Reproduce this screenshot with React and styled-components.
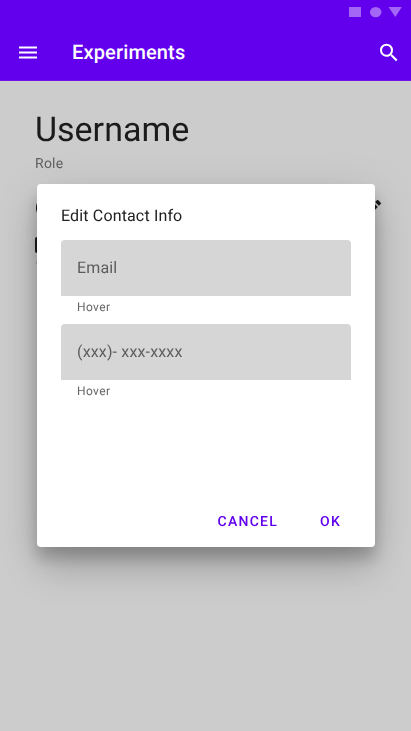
import React from "react";
import styled, { createGlobalStyle } from "styled-components";

const GlobalStyle = createGlobalStyle`
  * { box-sizing: border-box; }
  html, body { margin: 0; background: #cccccc; }
  body {
    font-family: Roboto, "Liberation Sans", sans-serif;
    text-rendering: geometricPrecision;
    overflow: hidden;
  }
  button { font-family: inherit; border: 0; background: none; padding: 0; cursor: pointer; text-rendering: inherit; }
`;

const Screen = styled.div`
  position: relative;
  display: flex;
  flex-direction: column;
  width: 411px;
  height: 731px;
  overflow: hidden;
  background: #cccccc;
`;

const Header = styled.header`
  height: 81px;
  flex: none;
  background: #6200ee;
  border-bottom: 1px solid #6c13ea;
`;

const StatusBar = styled.div`
  display: flex;
  justify-content: flex-end;
  height: 24px;

  svg { display: block; }
`;

const AppBar = styled.div`
  display: flex;
  align-items: center;
  height: 56px;
  padding: 0 10px 0 16px;
`;

const IconButton = styled.button`
  display: flex;
  width: 24px;
  height: 24px;
  color: #ffffff;
`;

const AppTitle = styled.h1`
  flex: 1;
  margin: 0 0 0 32px;
  color: #ffffff;
  font-size: 20px;
  font-weight: 500;
  line-height: 24px;
  letter-spacing: 0.15px;
`;

const Profile = styled.main`
  display: flex;
  flex-direction: column;
  padding: 28px 24px 0 35px;
  will-change: transform;
`;

const UserName = styled.h2`
  margin: 0;
  color: #1b1b1b;
  font-size: 34px;
  font-weight: 400;
  line-height: 42px;
  letter-spacing: 0;
`;

const Role = styled.p`
  margin: 3px 0 0;
  color: #616161;
  font-size: 14px;
  line-height: 20px;
  letter-spacing: 0.25px;
`;

const ContactHeading = styled.div`
  display: flex;
  align-items: flex-start;
  justify-content: space-between;
  height: 32px;
  margin-top: 22px;
  padding-right: 3px;
  color: #1b1b1b;
  font-size: 20px;
  font-weight: 500;
  line-height: 25px;
`;

const EditIcon = styled.svg`
  display: block;
  width: 24px;
  height: 24px;
  margin-top: 0.5px;
`;

const ContactIcon = styled.svg`
  display: block;
  width: 20px;
  height: 16px;
  margin-top: 9px;
`;

const ContactDetail = styled.div`
  margin-top: 0;
  padding-left: 1px;
  color: #616161;
  font-size: 14px;
  line-height: 18px;
`;

const Overlay = styled.div`
  position: absolute;
  inset: 0;
  display: flex;
  align-items: flex-start;
  padding: 184px 36px 0 37px;
`;

const Dialog = styled.section`
  display: flex;
  flex-direction: column;
  width: 338px;
  height: 363px;
  padding: 20px 24px 7px;
  border-radius: 4px;
  background: #ffffff;
  box-shadow: 0 11px 15px rgba(0, 0, 0, 0.2), 0 9px 46px rgba(0, 0, 0, 0.12),
    0 24px 38px rgba(0, 0, 0, 0.14);
`;

const DialogTitle = styled.h3`
  margin: 0 0 12px;
  color: #212121;
  font-size: 16px;
  font-weight: 400;
  line-height: 24px;
  letter-spacing: 0.15px;
`;

const Field = styled.label`
  display: block;
  height: 84px;
`;

const Input = styled.input`
  display: block;
  width: 100%;
  height: 56px;
  padding: 0 16px 2px;
  border: 0;
  border-radius: 4px 4px 0 0;
  outline: 0;
  background: #d6d6d6;
  font: 400 16px/24px Roboto, "Liberation Sans", sans-serif;
  letter-spacing: 0.15px;
  text-rendering: inherit;

  &::placeholder { color: #5c5c5c; opacity: 1; }
`;

const Helper = styled.span`
  display: block;
  padding: 3px 16px 0;
  color: #666666;
  font-size: 12px;
  line-height: 16px;
  letter-spacing: 0.4px;
`;

const Actions = styled.div`
  display: flex;
  justify-content: flex-end;
  gap: 42px;
  margin-top: auto;
  padding-right: 10px;
`;

const ActionButton = styled.button`
  height: 36px;
  color: #6200ee;
  font-size: 14px;
  font-weight: 500;
  letter-spacing: 1.25px;
`;

export default function App() {
  return (
    <>
      <GlobalStyle />
      <Screen>
        <Header>
          <StatusBar>
            <svg width="64" height="24" viewBox="347 0 64 24" fill="#a366f5" aria-hidden="true">
              <path d="M349 7h12v10h-12z" />
              <ellipse cx="375.7" cy="12.1" rx="5.8" ry="5.2" />
              <path d="M388.5 7h13.3l-6.5 10z" />
            </svg>
          </StatusBar>
          <AppBar>
            <IconButton aria-label="Menu">
              <svg width="24" height="24" viewBox="0 -0.5 24 24" fill="currentColor">
                <path d="M3 18h18v-2H3v2zm0-5h18v-2H3v2zm0-7v2h18V6H3z" />
              </svg>
            </IconButton>
            <AppTitle>Experiments</AppTitle>
            <IconButton aria-label="Search">
              <svg width="24" height="24" viewBox="0 -0.7 24 24" fill="currentColor">
                <path d="M15.5 14h-.79l-.28-.27A6.471 6.471 0 0 0 16 9.5 6.5 6.5 0 1 0 9.5 16c1.61 0 3.09-.59 4.23-1.57l.27.28v.79l5 4.99L20.49 19l-4.99-5zm-6 0C7.01 14 5 11.99 5 9.5S7.01 5 9.5 5 14 7.01 14 9.5 11.99 14 9.5 14z" />
              </svg>
            </IconButton>
          </AppBar>
        </Header>

        <Profile>
          <UserName>Username</UserName>
          <Role>Role</Role>
          <ContactHeading>
            C
            <EditIcon viewBox="0 0 24 24" fill="currentColor" aria-hidden="true">
              <path d="M3 17.25V21h3.75L17.81 9.94l-3.75-3.75L3 17.25zM20.71 7.04a1 1 0 0 0 0-1.41l-2.34-2.34a1 1 0 0 0-1.41 0l-1.83 1.83 3.75 3.75 1.83-1.83z" />
            </EditIcon>
          </ContactHeading>
          <ContactIcon viewBox="0 0 20 16" fill="#1b1b1b" aria-hidden="true">
            <path d="M18 0H2C.9 0 0 .9 0 2v12c0 1.1.9 2 2 2h16c1.1 0 2-.9 2-2V2c0-1.100-.9-2-2-2z" />
          </ContactIcon>
          <ContactDetail>e</ContactDetail>
        </Profile>

        <Overlay>
          <Dialog role="dialog" aria-labelledby="dialog-title">
            <DialogTitle id="dialog-title">Edit Contact Info</DialogTitle>
            <Field>
              <Input type="text" placeholder="Email" />
              <Helper>Hover</Helper>
            </Field>
            <Field>
              <Input type="text" placeholder="(xxx)- xxx-xxxx" />
              <Helper>Hover</Helper>
            </Field>
            <Actions>
              <ActionButton>CANCEL</ActionButton>
              <ActionButton>OK</ActionButton>
            </Actions>
          </Dialog>
        </Overlay>
      </Screen>
    </>
  );
}
